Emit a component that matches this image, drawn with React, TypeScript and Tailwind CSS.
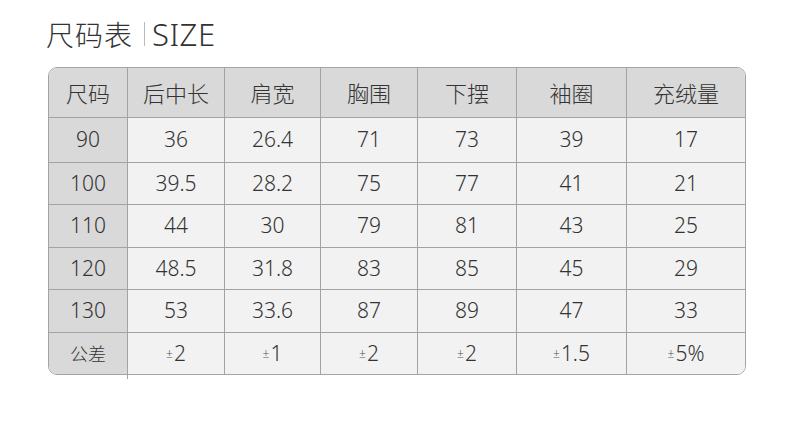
import React from "react";

const cols = [79, 97, 96, 97, 99, 110, 119];
const header = ["尺码", "后中长", "肩宽", "胸围", "下摆", "袖圈", "充绒量"];
const rows = [
  ["90", "36", "26.4", "71", "73", "39", "17"],
  ["100", "39.5", "28.2", "75", "77", "41", "21"],
  ["110", "44", "30", "79", "81", "43", "25"],
  ["120", "48.5", "31.8", "83", "85", "45", "29"],
  ["130", "53", "33.6", "87", "89", "47", "33"],
];
const tol = ["±2", "±1", "±2", "±2", "±1.5", "±5%"];
const rowH = [45, 42, 43, 42, 43];

const font = { fontFamily: '"Noto Sans CJK SC", "Noto Sans", sans-serif' };

export default function App() {
  return (
    <div className="w-[790px] h-[427px] bg-white text-[#333]" style={font}>
      <div className="flex items-center pl-[46px] pt-[18px] h-[50px]">
        <span className="text-[28px] leading-none font-light tracking-[1px]">尺码表</span>
        <span className="ml-[11px] mr-[7px] w-px h-[24px] bg-[#bbb]"></span>
        <span className="text-[31px] leading-none font-light tracking-[0.5px]" style={{ fontFamily: '"Noto Sans", sans-serif' }}>SIZE</span>
      </div>
      <div className="relative ml-[48px] mt-[17px] w-[698px]">
        <div className="border border-[#a3a3a3] rounded-[9px] overflow-hidden">
          <div className="flex h-[50px] bg-[#d9d9d9] border-b border-[#a3a3a3]">
            {header.map((h, i) => (
              <div
                key={i}
                className={`flex items-center justify-center text-[22px] font-light ${i < 6 ? "border-r border-[#a3a3a3]" : ""}`}
                style={{ width: i === 6 ? undefined : cols[i], flex: i === 6 ? 1 : undefined }}
              >
                {h}
              </div>
            ))}
          </div>
          {rows.map((r, ri) => (
            <div key={ri} className="flex border-b border-[#a3a3a3]" style={{ height: rowH[ri] }}>
              {r.map((c, i) => (
                <div
                  key={i}
                  className={`flex items-center justify-center text-[21px] font-light ${i === 0 ? "bg-[#d9d9d9]" : "bg-[#f2f2f2]"} ${i < 6 ? "border-r border-[#a3a3a3]" : ""}`}
                  style={{ width: i === 6 ? undefined : cols[i], flex: i === 6 ? 1 : undefined, fontFamily: '"Noto Sans", sans-serif' }}
                >
                  {c}
                </div>
              ))}
            </div>
          ))}
          <div className="flex h-[41px]">
            <div className="flex items-center justify-center w-[79px] bg-[#d9d9d9] border-r border-[#a3a3a3] text-[18px] font-light">
              公差
            </div>
            {tol.map((t, i) => (
              <div
                key={i}
                className={`flex items-center justify-center bg-[#f2f2f2] text-[21px] font-light ${i < 5 ? "border-r border-[#a3a3a3]" : ""}`}
                style={{ width: i === 5 ? undefined : cols[i + 1], flex: i === 5 ? 1 : undefined, fontFamily: '"Noto Sans", sans-serif' }}
              >
                <span className="text-[12px] mr-[1px] text-[#555]">±</span>
                {t.slice(1)}
              </div>
            ))}
          </div>
        </div>
        <div className="absolute left-[79px] top-full w-px h-[4px] bg-[#a3a3a3]"></div>
      </div>
    </div>
  );
}
